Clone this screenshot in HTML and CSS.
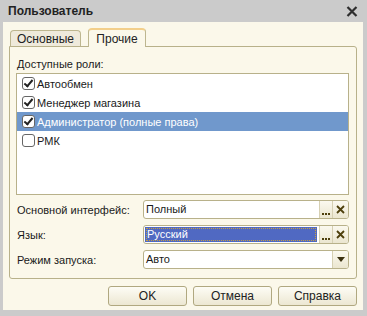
FILE: index.html
```html
<!DOCTYPE html>
<html lang="ru">
<head>
  <meta charset="UTF-8" />
  <title>Пользователь</title>
  <link rel="stylesheet" href="styles.css">
</head>
<body>
  <div class="window">
    <div class="titlebar">
      <span class="title">Пользователь</span>
      <svg class="close" width="12" height="11" viewBox="0 0 12 11">
        <path d="M1.5 1 L10.5 10 M10.5 1 L1.5 10" stroke="#2e2e2e" stroke-width="2.2" />
      </svg>
    </div>

    <div class="frame">
      <div class="tabs">
        <div class="tab first">Основные</div>
        <div class="tab active">Прочие</div>
      </div>

      <div class="panel">
        <div class="caption">Доступные роли:</div>
        <div class="list">
          <div class="row"><span class="check on"></span>Автообмен</div>
          <div class="row"><span class="check on"></span>Менеджер магазина</div>
          <div class="row selected"><span class="check on"></span>Администратор (полные права)</div>
          <div class="row"><span class="check"></span>РМК</div>
        </div>

        <div class="field">
          <label>Основной интерфейс:</label>
          <div class="input">
            <span class="value">Полный</span>
            <span class="btn dots"><i></i><i></i><i></i></span>
            <span class="btn clear">
              <svg width="9" height="9" viewBox="0 0 9 9"><path d="M1 1 L8 8 M8 1 L1 8" stroke="#4d3f0c" stroke-width="1.8" /></svg>
            </span>
          </div>
        </div>

        <div class="field">
          <label>Язык:</label>
          <div class="input">
            <span class="value focused">Русский</span>
            <span class="btn dots"><i></i><i></i><i></i></span>
            <span class="btn clear">
              <svg width="9" height="9" viewBox="0 0 9 9"><path d="M1 1 L8 8 M8 1 L1 8" stroke="#4d3f0c" stroke-width="1.8" /></svg>
            </span>
          </div>
        </div>

        <div class="field">
          <label>Режим запуска:</label>
          <div class="input">
            <span class="value">Авто</span>
            <span class="btn drop">
              <svg width="8" height="5" viewBox="0 0 8 5"><path d="M0 0 H8 L4 5 Z" fill="#3a3010" /></svg>
            </span>
          </div>
        </div>
      </div>

      <div class="buttons">
        <button class="button">OK</button>
        <button class="button">Отмена</button>
        <button class="button">Справка</button>
      </div>
    </div>
  </div>
</body>
</html>
```

FILE: styles.css
```css
body {
  margin: 0;
  font-family: "Liberation Sans", Arial, sans-serif;
  font-size: 11px;
  color: #1a1a1a;
  background: #cbcbcb;
}
.window {
  width: 367px;
  height: 316px;
  background: #cbcbcb;
  overflow: hidden;
}
.titlebar {
  height: 22px;
  display: flex;
  align-items: center;
  justify-content: space-between;
  padding: 0 9px 0 8px;
}
.title {
  font-weight: bold;
  font-size: 12px;
  color: #222;
}
.close {
  display: block;
}
.frame {
  margin: 0 4px 0 3px;
  height: 288px;
  background: #fbf8ea;
  padding: 6px 6px 0 6px;
  box-sizing: border-box;
}
.tabs {
  display: flex;
  align-items: flex-end;
  height: 18px;
  padding-left: 1px;
  gap: 7px;
  position: relative;
  z-index: 1;
}
.tab {
  height: 16px;
  line-height: 16px;
  box-sizing: border-box;
  text-align: center;
  border: 1px solid #bdb68f;
  border-bottom: none;
  border-radius: 4px 4px 0 0;
  background: #efeadb;
  color: #222;
  font-size: 12px;
}
.tab.first {
  width: 71px;
}
.tab.active {
  width: 58px;
  height: 19px;
  line-height: 18px;
  background: #fbf8ea;
  border-top: 2px solid #f3cf8a;
  margin-bottom: -1px;
}
.panel {
  border: 1px solid #b8b18a;
  border-radius: 0 3px 3px 3px;
  padding: 9px 7px 9px 6px;
  height: 233px;
  box-sizing: border-box;
}
.caption {
  height: 17px;
  line-height: 17px;
  padding-left: 1px;
}
.list {
  height: 122px;
  border: 1px solid #b8b18a;
  background: #fff;
  box-sizing: border-box;
}
.row {
  height: 19px;
  display: flex;
  align-items: center;
  padding-left: 5px;
}
.row.selected {
  background: #7098cc;
  color: #fff;
}
.check {
  width: 11px;
  height: 11px;
  border: 1px solid #666;
  border-radius: 3px;
  background: #fff;
  margin-right: 2px;
  position: relative;
  flex: none;
}
.check.on::after {
  content: '';
  position: absolute;
  left: 3px;
  top: 0px;
  width: 3px;
  height: 7px;
  border: solid #222;
  border-width: 0 2px 2px 0;
  transform: rotate(40deg);
}
.field {
  display: flex;
  align-items: center;
  margin-top: 5px;
  height: 19px;
}
.field + .field {
  margin-top: 6px;
}
.field label {
  width: 126px;
  padding-left: 1px;
  flex: none;
}
.input {
  width: 207px;
  height: 19px;
  box-sizing: border-box;
  border: 1px solid #b8b18a;
  border-radius: 3px;
  background: #fff;
  display: flex;
  overflow: hidden;
}
.value {
  flex: 1;
  line-height: 17px;
  padding-left: 2px;
}
.value.focused {
  background: #5069c2;
  color: #fff;
  outline: 1px dotted #c8a040;
  outline-offset: -2px;
  margin: 1px 2px 1px 1px;
  line-height: 15px;
}
.btn {
  flex: none;
  display: flex;
  align-items: center;
  justify-content: center;
  background: linear-gradient(#fbf9ef, #ebe6d0);
  border-left: 1px solid #d6d0b3;
}
.btn.dots {
  width: 13px;
  align-items: flex-end;
  gap: 1px;
  padding-bottom: 3px;
  box-sizing: border-box;
}
.btn.dots i {
  width: 2px;
  height: 2px;
  background: #4d3f0c;
}
.btn.clear {
  width: 15px;
}
.btn.drop {
  width: 15px;
}
.buttons {
  display: flex;
  justify-content: flex-end;
  gap: 6px;
  padding-top: 7px;
}
.button {
  width: 79px;
  height: 20px;
  font-family: inherit;
  font-size: 12px;
  color: #222;
  border: 1px solid #b0a880;
  border-radius: 3px;
  background: linear-gradient(#fdfcf5, #ece7d2);
  padding: 0;
}
```
